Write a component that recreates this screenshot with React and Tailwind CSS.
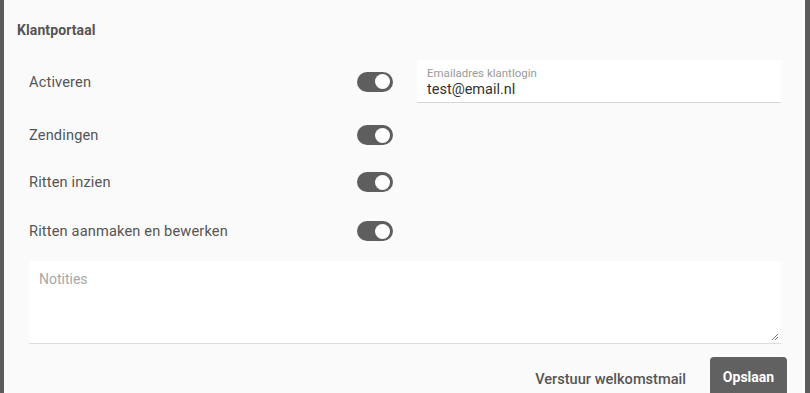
const Toggle = () => (
  <div className="w-[36px] h-[20px] rounded-full bg-[#5e5e5e] flex items-center justify-end pr-[3px]">
    <div className="w-[15px] h-[15px] rounded-full bg-white" />
  </div>
);

const Row = ({ label, className }) => (
  <div className={`flex items-center h-[20px] ${className}`}>
    <div className="w-[340px] pl-[12px] text-[14.6px] leading-[20px] tracking-[0.15px] text-[#555]">{label}</div>
    <Toggle />
  </div>
);

export default function App() {
  return (
    <div
      className="w-[810px] h-[393px] flex bg-[#5c5c5c] overflow-hidden"
      style={{ fontFamily: "Roboto, sans-serif" }}
    >
      <div className="w-[4px]" />
      <div className="flex-1 bg-[#fafafa] pl-[13px] pr-[19px] pt-[21px]">
        <div className="text-[14px] font-bold text-[#555] leading-[18px] tracking-[0.1px]">Klantportaal</div>

        <div className="flex items-center h-[43px] mt-[21px]">
          <div className="w-[340px] pl-[12px] text-[14.6px] leading-[20px] tracking-[0.15px] text-[#555]">Activeren</div>
          <Toggle />
          <div className="ml-[24px] w-[364px] h-[43px] bg-white border-b border-[#d6d6d6] px-[10px] pt-[6px]">
            <div className="text-[11.5px] text-[#9a9a9a] leading-[14px]">Emailadres klantlogin</div>
            <div className="text-[14.5px] text-[#333] leading-[18px] mt-[1px]">test@email.nl</div>
          </div>
        </div>

        <Row label="Zendingen" className="mt-[22px]" />
        <Row label="Ritten inzien" className="mt-[27px]" />
        <Row label="Ritten aanmaken en bewerken" className="mt-[29px]" />

        <div className="ml-[12px] mt-[20px] w-[752px] h-[83px] bg-white border-b border-[#dcdcdc] relative px-[10px] pt-[8px]">
          <div className="text-[14px] leading-[20px] text-[#a8a8a8]">Notities</div>
          <svg className="absolute right-[2px] bottom-[2px]" width="9" height="9" viewBox="0 0 9 9">
            <path d="M8 2 L2 8 M8 5 L5 8" stroke="#777" strokeWidth="1" />
          </svg>
        </div>

        <div className="flex justify-end items-center mt-[13px] mr-[-4px]">
          <div className="text-[14.6px] font-medium text-[#555] mr-[24px] mt-[1px]">Verstuur welkomstmail</div>
          <div className="w-[77px] h-[44px] rounded-[4px] bg-[#616161] text-white text-[14px] font-bold flex items-start justify-center pt-[10px]">
            Opslaan
          </div>
        </div>
      </div>
      <div className="w-[3px] bg-white" />
      <div className="w-[5px]" />
    </div>
  );
}
